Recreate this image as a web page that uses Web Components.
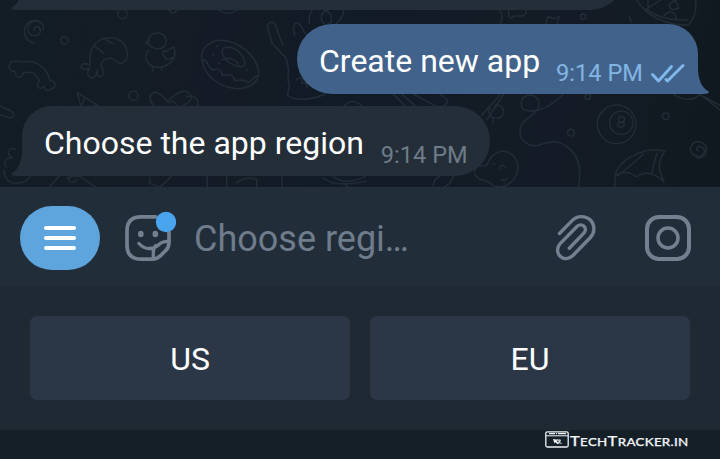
<!DOCTYPE html>
<html lang="en">
<head>
<meta charset="utf-8">
<title>Chat</title>
<style>
html,body{margin:0;padding:0;height:100%;overflow:hidden;background:#151f28}
body{font-family:Roboto,"Noto Sans",sans-serif}
</style>
</head>
<body>
<chat-screen></chat-screen>
<script>
function define(name, html) {
  const template = document.createElement('template');
  template.innerHTML = html;
  customElements.define(name, class extends HTMLElement {
    constructor() {
      super();
      this.attachShadow({mode: 'open'}).append(template.content.cloneNode(true));
    }
  });
}

define('chat-wallpaper', `
<style>:host{display:block;position:absolute;inset:0;z-index:0}svg{display:block}</style>
<svg width="720" height="187" viewBox="0 0 720 187" fill="none" stroke="#222c36" stroke-width="4.500" stroke-linecap="round" stroke-linejoin="round">
<g transform="scale(.33333)">
  <path d="M103 92c-4-9 7-16 14-10 10 9 2 25-12 25-18 0-28-20-18-33 14-19 47-12 43 16M103 128c-16 0-30-14-30-34 0-18 14-33 32-33 14 0 24 10 26 24"/>
  <circle cx="193" cy="121" r="11"/><circle cx="367" cy="42" r="14"/><circle cx="400" cy="287" r="14"/><path d="M507 30q12 18 24 0M655 30q28 20 56 0"/>
  <path d="M72 186C110 178 142 205 150 242c18-3 20 24 3 24-7 10-25 1-20-8-12 17-30-1-15-15-6-18-20-28-38-26l-11 1c0 20-26 18-22-4-24 4-26-28-6-30 16-2 18 2 31 2z"/>
  <path d="M270 170c2-35 28-57 60-57 52 0 68 62 35 78-12 0-18-16-36-17-16 1-25 12-26 24 16 20 4 38-8 31-4-6-4-12-3-18-5 24-19 30-28 14-3-8 2-16 6-21-14 8-28 2-27-6 6-12 20-8 27-2zM282 137l30 23M315 118l24 14"/>
  <path d="M448 135c-10-20 6-38 28-36 22 2 30 28 14 43-14 8-32 5-42-7zm0-13-12 5 10 8M446 150c-18 22-6 50 28 52 34 0 60-28 48-60-10 3-18 6-24 14-14-14-12 10 0 20 8 4 16 0 22-4M458 200v12M485 202v9"/>
  <path d="M607 185c-12-46 36-73 78-61 50 12 90 56 91 93 1 38-48 58-90 45-40-11-72-40-79-77zM607 180c18-5 14 27 34 30 14-7 24 0 26 16 24-4 33-1 38 16 24-7 34 5 44 4 10-12 18-17 27-20M669 145c36-15 72 28 64 52-20 14-78-21-64-52zM667 179c22-11 44 1 49 17M650 140l4-3M638 162l3 4M656 188l3 2M738 210l5 2"/>
  <path d="M232 278l12 45 50-6zM254 292l-7 20M450 300c0-26 18-29 35-14l17 17 30-23c27-16 54 3 36 25l-22 15M450 300l12 18M505 309q14-15 24 6M560 290c24-7 37 9 33 28"/>
  <path d="M0 318l33 15c14 9 8 25-8 20L0 344M18 500c-10-16 2-30 18-26-20-16-8-35 10-26M12 510c0 30 20 42 40 40 25-2 38-15 42-30M148 560l30-32M200 535q20-10 40-5l45 30M206 536a11 11 0 0 0 22 0M450 530v20l30 12 20-20 12-12M622 530v30"/>
</g>
<g transform="translate(200) scale(.33333)">
  <path d="M248 134 228 80c-6-22-28-16-24 6l12 44 40 42c16 30 6 50 9 74 8 12-2 28-2 38 12 20 70 18 112-2M284 104c-10-34 6-46 20-24l12 22M328 72c-4-58 28-52 55-40M374 72c-29-26 10-60 20-20 4 14-5 20-10 20M408 72q25-24 23-42M290 240c6-12 18-8 16 10 10-5 16 0 14 14"/>
  <path d="M432 318q25-27 54 0M22 530v30M80 560v-30M110 548q30-20 60-10v22M246 530v30M370 534q32 30 128 10M400 530q34 28 96 0M430 550l15 12"/>
</g>
<g transform="translate(360 90) scale(.33333)">
  <path d="M100 12l38 38M125 12l43 38M160 12l65 35c22 9 42-4 35-20l-20-15M365 76l55-62M380 90l50-76M405 45c34-4 34 40 4 40-18 0-29-17-18-30M398 84v15"/>
  <path d="M610 12c-35 34-78 60-116 48-15-10-15-40 12-44 23-4 38 20 28 38-12 30-54 29-54 74 0 22 24 44 54 38 34-9 54-20 83 2 30 19 52 54 38 122"/>
  <path d="M385 215c6-14 20-27 40-31 28-4 49 24 49 50-2 34-32 58-58 56-28-2-22-16-42-18-42-8-38-48-6-44 12 0 15-2 17-13zM400 220l3 3M418 236q8-20 18-2M424 268q9 10 16-4M220 290q0-24 20-32M254 290q20-8 26-32"/>
</g>
<g transform="translate(480) scale(.33333)">
  <path d="M470 0c28 45 80 76 155 75 22-24 26-54 20-80M498 28l50-32M500 28c35 26 76 35 124 31M504 26v-28M568 14l18-14 10 24c-16 9-30 3-28-10zM552 48c14-19 36-14 36 11M58 30q16 20 3 40M86 30v18q6 12 16 0h24q12-2 14-18M198 70l5-20 22 6 12-6-4 20"/>
  <circle cx="309" cy="50" r="8"/><circle cx="323" cy="290" r="8"/><circle cx="273" cy="398" r="10"/><circle cx="557" cy="349" r="10"/>
  <circle cx="410" cy="373" r="58"/><circle cx="424" cy="368" r="35"/><path d="M425 350c-13 0-12 14-2 17-16 1-12 16 0 14 16-2 10-14 2-14 14-5 10-17 0-17zM448 50l6 15"/>
  <path d="M580 280c16 20 62 26 80 2l60 48M667 288l53 28"/>
  <path d="M654 453c-9-6-1-16 8-13 16 4 14 25-4 29-20 2-33-18-24-32 14-22 49-11 45 16-3 14-14 23-28 21"/>
  <path d="M405 526c10-44 80-88 150-73-22 30-22 56-3 91M405 526c28-15 48-9 65 5 20-18 50-16 82 14M412 528q52-40 78-66M405 526v34M530 460l-15 60"/>
</g></svg>`);

define('message-bubble', `
<style>
:host{position:relative;z-index:1;box-sizing:border-box;display:flex;align-items:flex-start;height:70px;width:468px;padding:0 22px;background:#242e39;border-radius:30px 35px 35px 0;color:#fff;--tail:#242e39;--meta:#6e7b88}
:host([outgoing]){align-self:flex-end;width:401px;background:#41638b;border-radius:35px 30px 0 35px;--tail:#41638b;--meta:#83b5e3}
:host([earlier]){width:603px}
.text{font-size:32px;line-height:38px;padding-top:18px;white-space:nowrap}
.meta{font-size:23.600px;line-height:28px;padding-top:35px;margin-left:17px;color:var(--meta);white-space:nowrap;display:flex}
:host([outgoing]) .meta{margin-left:16px}
:host([earlier]) .meta{display:none}
.tail{position:absolute;bottom:0;left:-11px;fill:var(--tail)}
:host([outgoing]) .tail{left:auto;right:-11px;transform:scaleX(-1)}
.checks{display:none;margin:4px 0 0 7px}
:host([outgoing]) .checks{display:block}
</style>
<svg class="tail" width="12" height="24" viewBox="0 0 12 24"><path d="M12 0h-1C10.500 10 7 18 1 21c-1 .7-1 2 0 2.300Q3 24 6 24h6z"/></svg>
<span class="text"><slot></slot></span>
<span class="meta"><slot name="time"></slot><svg class="checks" width="36" height="22" viewBox="0 0 36 22" fill="none" stroke="#80b8ed" stroke-width="2.900" stroke-linecap="round" stroke-linejoin="round"><path d="M2.500 11.500l6 6.500L21.500 3.500M16 16.500l1.500 1.500L33 2.500"/></svg></span>`);

define('message-composer', `
<style>
:host{display:flex;align-items:center;box-sizing:border-box;height:99px;padding:1px 26px 0 20px;background:#222d3a;border-top:1px solid #252f3c}
.menu{width:80px;height:64px;border-radius:32px;background:#5da5dc;display:grid;place-content:center;gap:6px}
.menu i{display:block;width:32px;height:4px;border-radius:2px;background:#fff}
.sticker{margin-left:24px}
.input{margin-left:18px;padding-top:3px;font-size:36px;line-height:44px;color:#6f7c8b;white-space:nowrap;flex:1}
.clip{margin-right:44px}
svg{display:block;flex:none}
</style>
<div class="menu"><i></i><i></i><i></i></div>
<svg class="sticker" width="52" height="56" viewBox="124 210 52 56" fill="none" stroke="#72808f" stroke-width="3.700" stroke-linecap="round" stroke-linejoin="round"><path d="M156 216.900H141Q127 216.900 127 231v14q0 14.200 14 14.200h11q5 0 9-4l5-5q3-3 3-8V231"/><path d="M139 243.500q4.500 5 10 5 6 0 10-4 3.500-3.500 10-3.100M153.300 258.500v-6q0-4.500 2.500-7" stroke-width="3.300"/><g fill="#72808f" stroke="none"><ellipse cx="140.800" cy="234" rx="2.800" ry="3.300"/><ellipse cx="155.300" cy="234" rx="2.800" ry="3.300"/></g><circle cx="166" cy="222" r="10.200" fill="#49a3ed" stroke="none"/></svg>
<span class="input"><slot></slot></span>
<svg class="clip" width="44" height="52" viewBox="554 212 44 52" fill="none" stroke="#72808f" stroke-width="3.400" stroke-linecap="round" stroke-linejoin="round"><path d="M559.500 233.500l12.600-12.900c5-5.100 13-5.200 18-.9 5 4.900 5 12.800.3 17.800l-17.500 18c-3.700 3.800-9.300 4.200-12.800.8-3.600-3.500-3.300-9.200.3-12.900l16.300-16.700c2.300-2.300 5.400-2.400 7.300-.5 2 2 1.800 4.900-.4 7.200l-14.300 14.900"/></svg>
<svg width="52" height="52" viewBox="642 212 52 52" fill="none" stroke="#72808f" stroke-width="4"><rect x="647" y="217" width="42" height="42" rx="12"/><circle cx="668" cy="238" r="10" stroke-width="3.500"/></svg>`);

define('reply-key', `
<style>:host{display:grid;place-items:center;height:84px;border-radius:7px;background:#2b3746;color:#fff;font-size:32px;line-height:38px;box-sizing:border-box;padding-top:2px}</style><span><slot></slot></span>`);

define('reply-keyboard', `
<style>:host{display:grid;grid-template-columns:1fr 1fr;gap:20px;box-sizing:border-box;height:144px;padding:30px;background:#1f2934}</style><slot></slot>`);

define('site-credit', `
<style>
:host{display:flex;justify-content:flex-end;box-sizing:border-box;height:29px;padding-right:32px;background:#151f28;color:#f1f4f7;font:14px/17px Lato,sans-serif}
svg{margin-top:1px;margin-right:1px}
span{padding-top:2px;display:block;white-space:nowrap;width:118px}
b{font-weight:500;font-size:14px;-webkit-text-stroke:.25px currentColor;display:inline-block;transform-origin:0 50%;transform:scaleX(1.18);letter-spacing:.250px}
small{font-size:11.300px}
</style>
<svg width="24" height="17" viewBox="0 0 24 17" fill="none" stroke="#edf1f4"><rect x=".8" y=".8" width="22.400" height="15.200" rx="1.500" stroke-width="1.300"/><path d="M1 4.800h22"/><path d="M4 2.700h6M11 2.700h1M13 2.700h8" stroke-width="1.200"/><path d="M8 8l5 .8-1.400 1.300 2.600 2.200-1.300 1-2.700-2-.7 1.300z" fill="#edf1f4" stroke="none"/><path d="M12 9h3.500M14 9v3.500M14 11l2-1.500M14.500 11l2 2"/></svg>
<span><b>T<small>ECH</small>T<small>RACKER.IN</small></b></span>`);

define('chat-screen', `
<style>
:host{display:grid;grid-template-rows:187px 99px 144px 29px;width:720px;height:459px;overflow:hidden;font-family:Roboto,"Noto Sans",sans-serif}
.chat{position:relative;display:flex;flex-direction:column;justify-content:flex-end;gap:12px;box-sizing:border-box;padding:0 22px 11px;overflow:hidden;background:linear-gradient(100deg,#121d26,#151b26 30%,#111b25 45%,#141b26 78%,#10191f)}
[earlier]{margin-bottom:2px}
message-bubble{flex:none}
</style>
<section class="chat"><chat-wallpaper></chat-wallpaper>
<message-bubble earlier></message-bubble>
<message-bubble outgoing>Create new app<span slot="time">9:14 PM</span></message-bubble>
<message-bubble>Choose the app region<span slot="time">9:14 PM</span></message-bubble></section>
<message-composer>Choose regi…</message-composer>
<reply-keyboard><reply-key>US</reply-key><reply-key>EU</reply-key></reply-keyboard>
<site-credit></site-credit>`);
</script>
</body>
</html>
